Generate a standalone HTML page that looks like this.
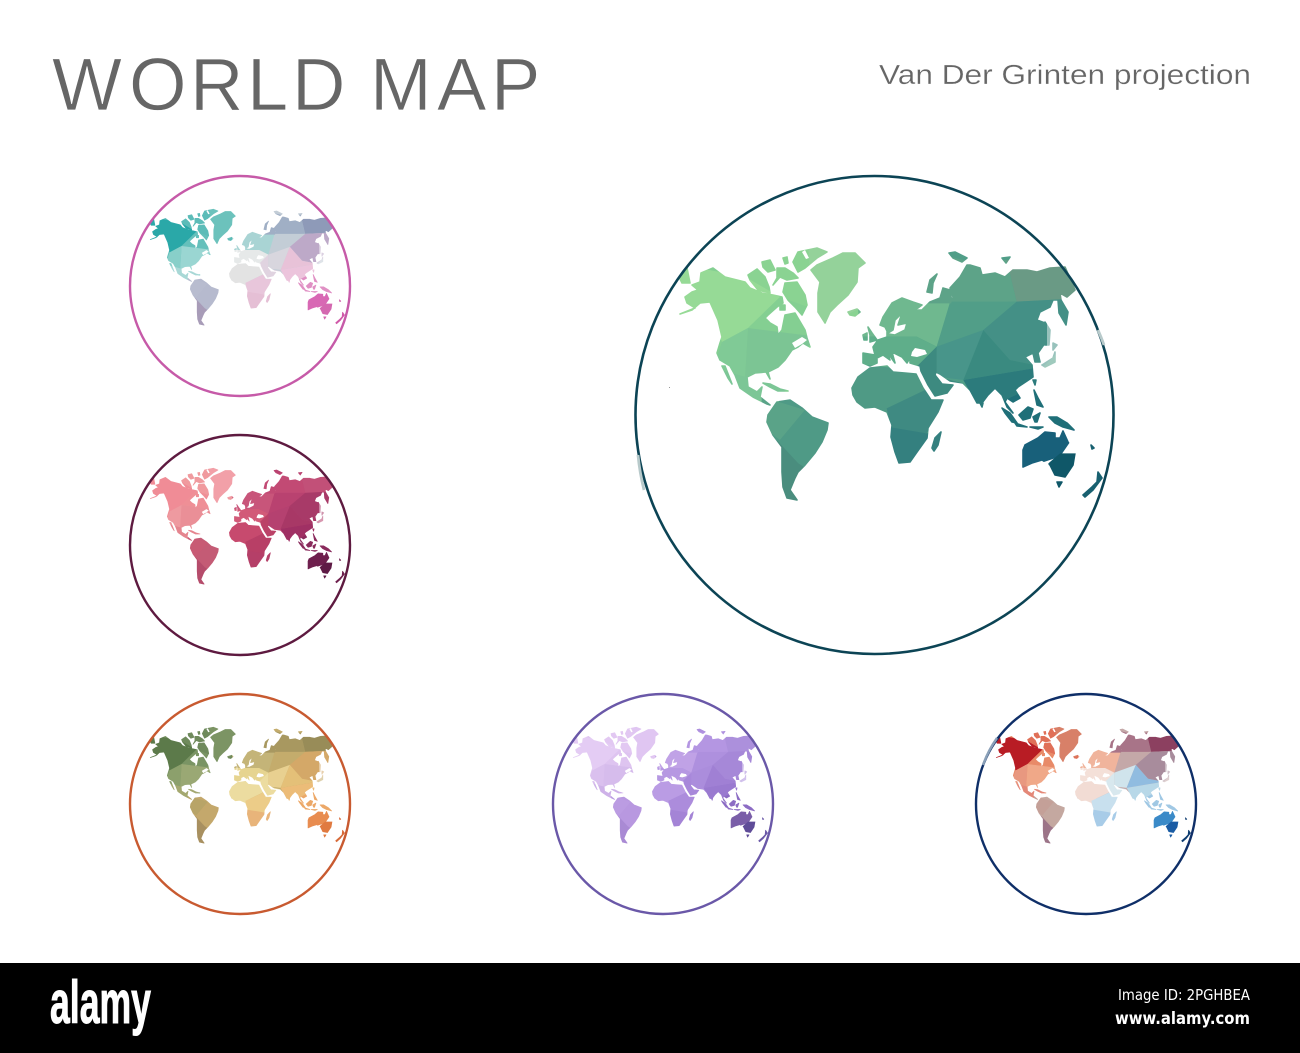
<!DOCTYPE html>
<html lang="en"><head><meta charset="utf-8"><title>World Map</title>
<style>html,body{margin:0;padding:0;background:#fff}svg{display:block}</style></head>
<body>
<svg xmlns="http://www.w3.org/2000/svg" width="1300" height="1053" viewBox="0 0 1300 1053">
<defs>
<mask id="c" maskUnits="userSpaceOnUse" x="600" y="200" width="560" height="340"><path fill="#fff" stroke="#fff" stroke-width="1.6" stroke-linejoin="round" d="M680 314L695 308 687 303 685 297 692 292 698 290 692 285 700 282 701 273 713 268 725 277 745 282 750 288 762 293 773 295 782 297 783 303 777 307 768 315 765 318 770 323 777 327 778 335 782 330 785 315 795 313 805 330 807 338 810 347 803 343 798 347 792 350 785 360 778 367 768 372 770 379 766 372 755 373 747 377 748 387 757 392 762 387 760 397 770 405 767 404 753 397 740 388 735 375 730 366 720 360 717 353 720 343 722 337 718 320 710 302 700 303 692 310Z
M725 366L732 384 728 378 722 366Z
M748 275L757 269 765 277 769 287 770 293 758 290 750 280Z
M762 262L770 260 775 270 768 272 763 267Z
M777 268L785 268 793 273 798 278 787 280 780 277 773 285 777 278Z
M785 283L797 282 805 295 807 305 802 315 795 307 788 300 783 292Z
M793 262L798 252 817 248 827 252 817 258 805 268 798 272Z
M783 258L787 257 788 263 785 264Z
M780 305L785 305 785 310 780 310Z
M763 383L770 384 780 389 788 391 778 391 770 387Z
M811 270L817 265 833 258 843 253 855 253 865 263 858 268 857 282 848 295 837 305 830 312 825 323 818 312 818 293 820 282Z
M848 312L857 309 860 312 855 316 850 315Z
M679 277L687 268 690 283 682 283Z
M768 415L777 402 790 400 802 408 812 417 828 423 827 430 822 442 815 453 805 465 798 472 795 478 790 490 797 500 787 498 783 487 782 472 782 447 773 435 767 422Z
M852 388L858 377 870 368 887 366 893 372 905 373 916 374 923 388 931 400 943 400 938 412 928 428 927 438 917 452 910 462 899 463 895 452 891 437 892 425 887 412 875 407 865 408 857 402 853 395Z
M932 448L935 438 941 432 938 445 934 451Z
M863 363L863 353 875 355 873 347 878 340 887 337 887 328 889 334 895 335 905 330 907 323 898 325 902 313 895 320 893 330 888 333 885 327 880 325 883 317 892 303 902 298 913 302 922 305 918 308 913 310 922 310 930 302 940 298 943 288 950 290 952 303 953 297 950 288 960 277 967 265 970 265 980 268 982 275 995 273 1005 277 1013 270 1027 270 1037 272 1050 268 1065 267 1072 283 1075 290 1067 297 1060 293 1061 300 1068 312 1066 325 1059 313 1058 300 1053 300 1050 307 1040 312 1037 320 1045 323 1045 343 1038 353 1040 362 1035 362 1033 353 1025 357 1032 365 1033 377 1018 387 1015 390 1020 398 1013 402 1007 398 1005 402 1013 413 1007 407 1002 395 995 388 988 395 982 403 977 403 970 390 963 383 950 381 940 374 936 372 935 375 942 384 953 385 947 393 935 396 928 385 921 371 920 366 910 363 910 358 907 363 902 357 892 352 895 363 887 352 890 360 883 355 877 358 877 363 870 366Z
M927 292L930 280 937 274 933 283 932 293Z
M949 253L955 252 967 258 962 262 953 258Z
M868 327L872 333 877 340 870 342 870 335Z
M863 335L867 333 867 340 864 340Z
M1002 258L1010 257 1006 263Z
M1045 322L1050 330 1049 345 1045 345Z
M1053 343L1057 345 1053 350Z
M1042 365L1053 358 1055 352 1055 362 1045 367Z
M1033 380L1036 380 1035 385Z
M1034 390L1038 398 1043 407 1037 405Z
M980 403L983 403 982 407Z
M1002 408L1010 413 1017 423 1012 422 1005 413Z
M1015 423L1027 427 1017 426Z
M1019 415L1028 407 1033 409 1030 418 1023 420Z
M1033 417L1040 413 1037 422 1035 422Z
M1049 417L1057 417 1067 423 1074 430 1063 427 1055 423Z
M1030 427L1043 427 1038 429Z
M1023 450L1025 445 1038 438 1045 432 1055 433 1055 438 1060 438 1063 431 1068 442 1075 453 1073 465 1065 477 1055 475 1050 465 1042 460 1032 463 1023 467 1023 458Z
M1057 482L1062 482 1059 487Z
M1083 495L1092 487 1097 482 1098 472 1102 478 1093 490 1085 497Z
M1091 445L1094 448 1092 449Z"/></mask>
<g id="mesh">
<g transform="translate(630 170) scale(.33333)">
<rect x="120" y="220" width="600" height="520" style="fill:var(--a3)"/>
<rect x="380" y="680" width="240" height="340" style="fill:var(--s2)"/>
<rect x="650" y="570" width="310" height="330" style="fill:var(--f1)"/>
<rect x="680" y="230" width="720" height="470" style="fill:var(--r3)"/>
<rect x="1100" y="640" width="290" height="150" style="fill:var(--r9)"/>
<polygon style="fill:var(--a2)" points="340,220 720,220 720,480 540,500 340,480"/>
<polygon style="fill:var(--a1)" points="130,280 345,320 450,381 354,474 276,516 240,430 130,450"/>
<polygon style="fill:var(--a3)" points="450,381 560,420 560,500 354,474"/>
<polygon style="fill:var(--a4)" points="276,516 354,474 345,620 330,690 240,620"/>
<polygon style="fill:var(--a5)" points="354,474 560,500 500,570 420,640 345,620"/>
<polygon style="fill:var(--a6)" points="270,600 345,620 480,640 430,720 330,690"/>
<polygon style="fill:var(--g)" points="535,230 720,230 720,400 640,440 550,470"/>
<polygon style="fill:var(--s1)" points="395,680 525,720 450,810 395,770"/>
<polygon style="fill:var(--s2)" points="525,720 610,750 560,860 505,890 450,810"/>
<polygon style="fill:var(--s3)" points="440,810 505,880 520,890 510,1000 440,1000"/>
<polygon style="fill:var(--e1)" points="680,360 965,380 920,530 860,500 690,500"/>
<polygon style="fill:var(--e2)" points="680,500 860,500 920,530 880,590 850,600 680,600"/>
<polygon style="fill:var(--f1)" points="650,580 860,600 885,660 770,715 690,730"/>
<polygon style="fill:var(--f2)" points="770,715 885,660 950,690 890,790 785,780"/>
<polygon style="fill:var(--f3)" points="770,770 890,790 945,780 900,890 790,890"/>
<polygon style="fill:var(--r1)" points="965,400 1160,395 1130,270 1000,270 880,240 880,400"/>
<polygon style="fill:var(--r2)" points="1130,270 1350,270 1350,385 1160,395"/>
<polygon style="fill:var(--r3)" points="965,395 1160,395 1060,480 920,530"/>
<polygon style="fill:var(--r4)" points="1160,395 1350,385 1350,480 1240,590 1140,570 1060,480"/>
<polygon style="fill:var(--r5)" points="920,530 1060,480 1000,630 920,620"/>
<polygon style="fill:var(--r6)" points="1060,480 1140,570 1240,590 1000,630"/>
<polygon style="fill:var(--r7)" points="860,590 920,530 920,620 1000,640 960,690 900,690"/>
<polygon style="fill:var(--r8)" points="1000,630 1240,590 1210,660 1130,740 1050,720"/>
<polygon style="fill:var(--r9)" points="1105,700 1210,650 1360,650 1360,790 1105,790"/>
<polygon style="fill:var(--o1)" points="1170,780 1345,780 1290,860 1170,900"/>
<polygon style="fill:var(--o2)" points="1290,850 1345,850 1340,960 1270,960 1255,880"/>
<polygon style="fill:var(--n)" points="1350,810 1430,810 1430,990 1350,990"/>
</g>
<polygon fill="#fff" points="912,352 915,348 925,350 927,354 917,357 911,356"/>
<polygon fill="#fff" points="792,343 802,337 807,340 802,344 795,348"/>
<polygon fill="#fff" points="802,252 805,250 809,258 806,259"/>
<polygon fill="#fff" opacity=".45" points="1047,320 1060,320 1060,372 1040,372 1042,362 1047,352"/>
</g>
</defs>
<rect width="1300" height="1053" fill="#fff"/>

<text x="52 129 190 247 292 300 370 437 491" y="110" font-family="'Liberation Sans',sans-serif" font-size="74" fill="#666" stroke="#fff" stroke-width=".7">WORLD MAP</text>
<text x="879" y="84" font-family="'Liberation Sans',sans-serif" font-size="28" fill="#666" textLength="372" lengthAdjust="spacingAndGlyphs" stroke="#fff" stroke-width=".25">Van Der Grinten projection</text>

<!-- large green -->
<g style="--a1:#96da96;--a2:#8ad392;--a3:#84cf92;--a4:#80ca96;--a5:#7cc594;--a6:#7cc696;--g:#94d29a;--s1:#5aa388;--s2:#4f9a86;--s3:#4a8d7e;--e1:#6fb88f;--e2:#5fae8a;--f1:#4f9a85;--f2:#3f8a82;--f3:#34807f;--r1:#5da388;--r2:#6a9a85;--r3:#519e88;--r4:#449086;--r5:#48958a;--r6:#3a8a80;--r7:#3d8a80;--r8:#2c7b7c;--r9:#1f6f78;--o1:#18607a;--o2:#0f5768;--n:#186070">
<g mask="url(#c)"><use href="#mesh"/></g></g>
<rect x="669" y="387" width="1" height="1" fill="#999"/>
<circle cx="874.5" cy="415" r="239" fill="none" stroke="#0c4455" stroke-width="2.6"/>
<path d="M1098 330A239 239 0 0 1 1104 345M638 455A239 239 0 0 0 644 490" fill="none" stroke="#b8cacb" stroke-width="2.8"/>

<!-- teal-pink -->
<g transform="translate(240 286) scale(.46) translate(-875 -415)" style="--a1:#2aa8a8;--a2:#5cbcb8;--a3:#65c0bb;--a4:#88cfc9;--a5:#9ad6d2;--a6:#a8d8d6;--g:#6cc2bc;--s1:#b8bccf;--s2:#b6bace;--s3:#a89cb8;--e1:#a9d4d4;--e2:#e6e9e9;--f1:#e3e3e3;--f2:#e8c6db;--f3:#e5bfd5;--r1:#a0afc5;--r2:#8e9ab8;--r3:#c3cdd6;--r4:#bda9c8;--r5:#d8d6de;--r6:#e8c2d8;--r7:#e0d3e0;--r8:#ecc4dc;--r9:#e090c4;--o1:#d868b4;--o2:#d468b0;--n:#d058a8">
<g mask="url(#c)"><use href="#mesh"/></g></g>
<circle cx="240" cy="286" r="110" fill="none" stroke="#c65aa8" stroke-width="2.4"/>

<!-- pink-plum -->
<g transform="translate(240 545) scale(.46) translate(-875 -415)" style="--a1:#f08c96;--a2:#f09a9e;--a3:#ef8f96;--a4:#ee9aa0;--a5:#ea8f97;--a6:#e5858f;--g:#f2a0a8;--s1:#c85a74;--s2:#c45b75;--s3:#b54c6b;--e1:#c8557a;--e2:#d25a78;--f1:#c74a6e;--f2:#b83f66;--f3:#b53f68;--r1:#c24a74;--r2:#c25078;--r3:#b94270;--r4:#a83a68;--r5:#b54170;--r6:#a83866;--r7:#bb4268;--r8:#a03064;--r9:#8a2a5c;--o1:#6e1f4d;--o2:#5e1a45;--n:#6e1f4d">
<g mask="url(#c)"><use href="#mesh"/></g></g>
<circle cx="240" cy="545" r="110" fill="none" stroke="#5e1a40" stroke-width="2.4"/>

<!-- olive-orange -->
<g transform="translate(240 804) scale(.46) translate(-875 -415)" style="--a1:#5c7a4a;--a2:#6f8a5c;--a3:#7a9464;--a4:#8ca06c;--a5:#9aa874;--a6:#a4a870;--g:#7c9464;--s1:#b8a468;--s2:#c4a86c;--s3:#a89060;--e1:#c4b478;--e2:#e6d490;--f1:#ecdca0;--f2:#eccc88;--f3:#e8b47a;--r1:#a89860;--r2:#988c58;--r3:#c4ac6c;--r4:#d4a868;--r5:#e8d090;--r6:#e4c078;--r7:#ecdca0;--r8:#ecbc78;--r9:#eca868;--o1:#e88c50;--o2:#e07a40;--n:#d86a38">
<g mask="url(#c)"><use href="#mesh"/></g></g>
<circle cx="240" cy="804" r="110" fill="none" stroke="#c85a30" stroke-width="2.4"/>

<!-- purple -->
<g transform="translate(663 804) scale(.46) translate(-875 -415)" style="--a1:#e4ccf4;--a2:#e2c8f2;--a3:#dec4f0;--a4:#dac0ee;--a5:#d6bcec;--a6:#ceb2e8;--g:#e0c6f2;--s1:#bb9ce2;--s2:#b898e0;--s3:#a98ad4;--e1:#c0a2e6;--e2:#b698e2;--f1:#ba9ce4;--f2:#ac8cdc;--f3:#a484d6;--r1:#b496e2;--r2:#ac90dc;--r3:#ae90de;--r4:#a688d8;--r5:#ab8ddc;--r6:#a080d4;--r7:#a888da;--r8:#9a7ad0;--r9:#8c6cc4;--o1:#7a5ea8;--o2:#5f4c98;--n:#6a58a8">
<g mask="url(#c)"><use href="#mesh"/></g></g>
<circle cx="663" cy="804" r="110" fill="none" stroke="#6a58a8" stroke-width="2.4"/>

<!-- red-blue -->
<g transform="translate(1086 804) scale(.46) translate(-875 -415)" style="--a1:#b81c24;--a2:#e07058;--a3:#e88a68;--a4:#e89880;--a5:#f0a888;--a6:#e48878;--g:#d88068;--s1:#c4a098;--s2:#c4a8a0;--s3:#9c7488;--e1:#f0b49c;--e2:#f4e0d8;--f1:#f2dcd4;--f2:#c8e0ee;--f3:#a8cce8;--r1:#a87488;--r2:#8c4060;--r3:#c4a8a8;--r4:#a88c9c;--r5:#d0e4ec;--r6:#90bce0;--r7:#d8e8ee;--r8:#b8d8e8;--r9:#a0c8e4;--o1:#3a8ac8;--o2:#1a5ca4;--n:#0c3c70">
<g mask="url(#c)"><use href="#mesh"/></g></g>
<circle cx="1086" cy="804" r="110" fill="none" stroke="#0f2f68" stroke-width="2.4"/>
<path d="M997 738A110 110 0 0 0 983 765" fill="none" stroke="#8aa0b8" stroke-width="2.4"/>

<!-- footer -->
<rect x="0" y="963" width="1300" height="90" fill="#000"/>
<text x="50" y="1023" font-family="'Liberation Sans',sans-serif" font-weight="700" font-size="60" fill="#fff" stroke="#fff" stroke-width="1" textLength="101" lengthAdjust="spacingAndGlyphs">alamy</text>
<text x="1118" y="1000" font-family="'DejaVu Sans',sans-serif" font-size="15" fill="#fff" textLength="132" lengthAdjust="spacingAndGlyphs">Image ID: 2PGHBEA</text>
<text x="1115" y="1024" font-family="'DejaVu Sans',sans-serif" font-weight="700" font-size="17" fill="#fff" textLength="135" lengthAdjust="spacingAndGlyphs">www.alamy.com</text>
</svg>
</body></html>
